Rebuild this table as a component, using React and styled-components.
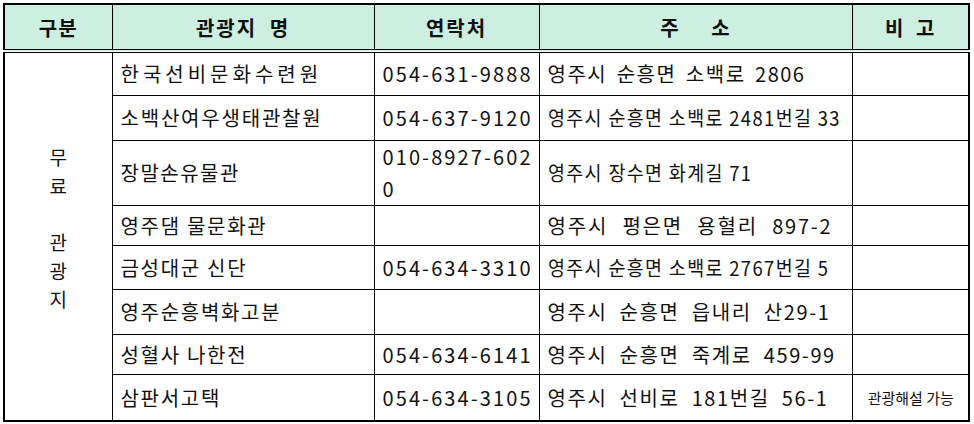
import React from 'react';
import styled, { createGlobalStyle } from 'styled-components';

const GlobalStyle = createGlobalStyle`
  html, body {
    margin: 0;
    padding: 0;
    background: #fff;
  }
  body {
    font-family: "Noto Sans CJK KR", "Noto Sans", sans-serif;
    color: #111;
  }
`

const Page = styled.div`
  padding: 3px 0 0 3px;
`

const Table = styled.table`
  width: 967px;
  table-layout: fixed;
  border-collapse: collapse;
  border: 2px solid #000;
`

const HeadCell = styled.th`
  height: 44px;
  padding: 0;
  background: #cdefe1;
  border: 1px solid #000;
  border-bottom: 4px double #000;
  font-size: 20px;
  font-weight: 600;
  letter-spacing: ${p => p.$spacing || 1}px;
  word-spacing: ${p => p.$wordSpacing || 0}px;
  text-align: center;
  vertical-align: middle;
`

const Cell = styled.td`
  height: ${p => p.$h}px;
  padding: 0 0 0 ${p => p.$pad || 8}px;
  border: 1px solid #000;
  font-size: ${p => p.$small ? 15 : 20}px;
  letter-spacing: ${p => p.$spacing ?? 1}px;
  word-spacing: ${p => p.$wordSpacing || 0}px;
  text-align: ${p => p.$center ? 'center' : 'left'};
  line-height: 1.6;
  vertical-align: middle;
  word-break: break-all;
  white-space: ${p => p.$nowrap ? 'nowrap' : 'normal'};
`

const Narrow = styled.span`
  display: inline-block;
  letter-spacing: 1.5px;
  transform: scaleX(0.92);
  transform-origin: left center;
  white-space: nowrap;
`

const GroupCell = styled.td`
  padding: 0;
  border: 1px solid #000;
  vertical-align: middle;
`

const VerticalLabel = styled.div`
  display: flex;
  flex-direction: column;
  align-items: center;
  margin-top: -16px;
  font-size: 19px;
  line-height: 28.5px;
`

const Gap = styled.span`
  height: 28px;
`

const rows = [
  { name: '한국선비문화수련원', nameSp: 4, tel: '054-631-9888', addr: '영주시 순흥면 소백로 2806', addrSp: 1.5, addrWs: 3.5, h: 42 },
  { name: '소백산여우생태관찰원', nameSp: 1.8, tel: '054-637-9120', addr: '영주시 순흥면 소백로 2481번길 33', narrow: true, h: 44 },
  { name: '장말손유물관', nameSp: 1.5, tel: '010-8927-6020', addr: '영주시 장수면 화계길 71', narrow: true, h: 62 },
  { name: '영주댐 물문화관', nameSp: 1.7, tel: '', addr: '영주시 평은면 용혈리 897-2', addrSp: 1.8, addrWs: 8, h: 39 },
  { name: '금성대군 신단', nameSp: 1.7, tel: '054-634-3310', addr: '영주시 순흥면 소백로 2767번길 5', narrow: true, h: 43 },
  { name: '영주순흥벽화고분', nameSp: 1.7, tel: '', addr: '영주시 순흥면 읍내리 산29-1', addrSp: 1.6, addrWs: 6, h: 44 },
  { name: '성혈사 나한전', nameSp: 1.7, tel: '054-634-6141', addr: '영주시 순흥면 죽계로 459-99', addrSp: 1.6, addrWs: 6, h: 39 },
  { name: '삼판서고택', nameSp: 1.7, tel: '054-634-3105', addr: '영주시 선비로 181번길 56-1', addrSp: 1.6, addrWs: 6, note: '관광해설 가능', h: 45 },
]

const App = () => {
  return (
    <Page>
      <GlobalStyle />
      <Table>
        <colgroup>
          <col style={{ width: 108 }} />
          <col style={{ width: 262 }} />
          <col style={{ width: 165 }} />
          <col style={{ width: 313 }} />
          <col />
        </colgroup>
        <thead>
          <tr>
            <HeadCell>구분</HeadCell>
            <HeadCell $spacing={2} $wordSpacing={6}>관광지 명</HeadCell>
            <HeadCell $spacing={2}>연락처</HeadCell>
            <HeadCell $wordSpacing={26}>주 소</HeadCell>
            <HeadCell $wordSpacing={6}>비 고</HeadCell>
          </tr>
        </thead>
        <tbody>
          {rows.map((row, i) => (
            <tr key={row.name}>
              {i === 0 &&
                <GroupCell rowSpan={rows.length}>
                  <VerticalLabel>
                    <span>무</span>
                    <span>료</span>
                    <Gap />
                    <span>관</span>
                    <span>광</span>
                    <span>지</span>
                  </VerticalLabel>
                </GroupCell>
              }
              <Cell $h={row.h} $spacing={row.nameSp}>{row.name}</Cell>
              <Cell $h={row.h} $spacing={2.1}>{row.tel}</Cell>
              <Cell $h={row.h} $spacing={row.narrow ? 0 : row.addrSp} $wordSpacing={row.addrWs} $nowrap>
                {row.narrow ? <Narrow>{row.addr}</Narrow> : row.addr}
              </Cell>
              <Cell $h={row.h} $small $center $spacing={0} $pad={1}>{row.note}</Cell>
            </tr>
          ))}
        </tbody>
      </Table>
    </Page>
  );
}

export default App;
